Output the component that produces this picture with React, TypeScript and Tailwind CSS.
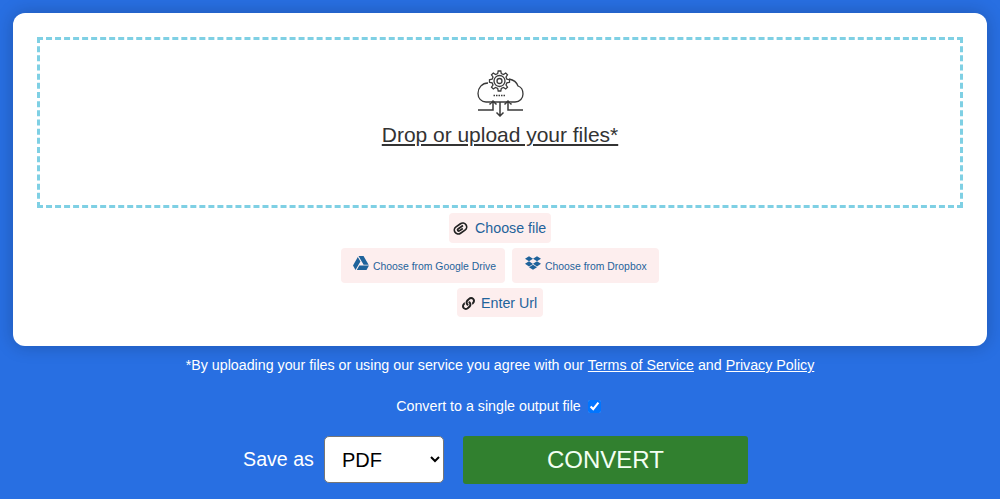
import { FaGoogleDrive, FaDropbox, FaLink } from "react-icons/fa";

function CloudIcon() {
  return (
    <svg width="48" height="47" viewBox="0 0 48 47" fill="none" stroke="#3a3a3a" strokeWidth="1.3">
      <path d="M12 13 C6 13 2 18 2 23.5 C2 28 5 32 10 32 L39 32 C44 32 47 28 47 24 C47 20 45 17 42 16 C41 13 38 10 33 9" />
      <g transform="translate(-0.5 -1)">
        <path d="M23 2 L25.300 2 L25.800 4.600 L28 5.500 L30.200 4 L32 5.800 L30.500 8 L31.400 10.200 L34 10.700 L34 13.300 L31.400 13.800 L30.500 16 L32 18.200 L30.200 20 L28 18.500 L25.800 19.400 L25.300 22 L22.700 22 L22.200 19.400 L20 18.500 L17.800 20 L16 18.200 L17.500 16 L16.600 13.800 L14 13.300 L14 10.700 L16.600 10.200 L17.500 8 L16 5.800 L17.800 4 L20 5.500 L22.200 4.600 L22.700 2 Z" fill="#fff" />
        <circle cx="24" cy="12" r="5.500" />
        <circle cx="24" cy="12" r="2.500" />
      </g>
      <path d="M17.500 25.500 H30" strokeWidth="1.500" strokeDasharray="1.500 1" />
      <path d="M2 40 H17 V31 M13.500 34.500 L17 31 L20.500 34.500" strokeWidth="1.500" fill="#fff" />
      <path d="M47 40 H32 V31 M28.500 34.500 L32 31 L35.500 34.500" strokeWidth="1.500" fill="#fff" />
      <path d="M24 32 V46 M20.500 42.500 L24 46 L27.500 42.500" strokeWidth="1.500" />
    </svg>
  );
}

function ClipIcon() {
  return (
    <svg width="15" height="15" viewBox="0 0 16 16" fill="none" stroke="#222" strokeWidth="1.800" className="mb-[1px] shrink-0">
      <g transform="rotate(-35 8 8)">
        <rect x="0.900" y="3.800" width="14.200" height="8.400" rx="4.200" />
        <path d="M12 6.900 H5.500 C4 6.900 4 9.400 5.500 9.400 H10" />
      </g>
    </svg>
  );
}

export default function App() {
  return (
    <div className="h-[499px] overflow-hidden bg-[#286fe2] font-['Liberation_Sans',Arial,sans-serif] pt-[13px] px-[13px]">
      <div className="h-[333px] rounded-xl bg-white px-6 pt-6 shadow-[0_0_18px_rgba(0,0,0,0.22)]">
        <div className="flex h-[171px] flex-col items-center border-[3px] border-dashed border-[#7fd0e4] pt-[30px]">
          <CloudIcon />
          <span className="mt-[6px] text-[21px] leading-[24px] tracking-[-0.02px] text-[#333] underline">Drop or upload your files*</span>
        </div>
        <div className="flex flex-col items-center">
          <button className="mt-[5px] flex h-[30px] w-[102px] items-center gap-[7px] rounded bg-[#fdeeee] pl-[4px] pt-[1px] text-[14.25px] text-[#1f639b]">
            <ClipIcon />
            Choose file
          </button>
          <div className="mt-[5px] flex gap-[7px]">
            <button className="flex h-[35px] w-[164px] items-center gap-[4px] rounded bg-[#fdeeee] pl-[12px] pt-[3px] text-[10.4px] text-[#1f639b]">
              <FaGoogleDrive className="mb-[8px] text-[16px]" />
              Choose from Google Drive
            </button>
            <button className="flex h-[35px] w-[147px] items-center gap-[4px] rounded bg-[#fdeeee] pl-[13px] pt-[3px] text-[10.4px] text-[#1f639b]">
              <FaDropbox className="mb-[8px] text-[16px]" />
              Choose from Dropbox
            </button>
          </div>
          <button className="mt-[5px] flex h-[29px] w-[86px] items-center gap-[6px] rounded bg-[#fdeeee] pl-[5px] pt-[2px] text-[14.25px] text-[#1f639b]">
            <FaLink className="text-[13px] text-[#222]" />
            Enter Url
          </button>
        </div>
      </div>
      <p className="mt-[11px] text-center text-[14.25px] leading-4 text-white">
        *By uploading your files or using our service you agree with our <a className="underline">Terms of Service</a> and <a className="underline">Privacy Policy</a>
      </p>
      <label className="mt-[25px] flex items-center justify-center gap-[7px] pr-[3px] text-[14.25px] leading-4 text-white">
        Convert to a single output file
        <input type="checkbox" checked readOnly className="h-[13px] w-[13px] accent-[#0075ff]" />
      </label>
      <div className="mt-[22px] flex items-start justify-center pr-[9px]">
        <span className="self-center text-[19.6px] text-white">Save as</span>
        <select className="ml-[10px] h-[47px] w-[120px] rounded-[5px] border border-[#767676] bg-white pl-[13px] text-xl text-black" defaultValue="PDF">
          <option>PDF</option>
        </select>
        <button className="ml-[19px] h-[48px] w-[285px] rounded-[3px] bg-[#31802f] text-2xl text-[#f3fff3]">CONVERT</button>
      </div>
    </div>
  );
}
